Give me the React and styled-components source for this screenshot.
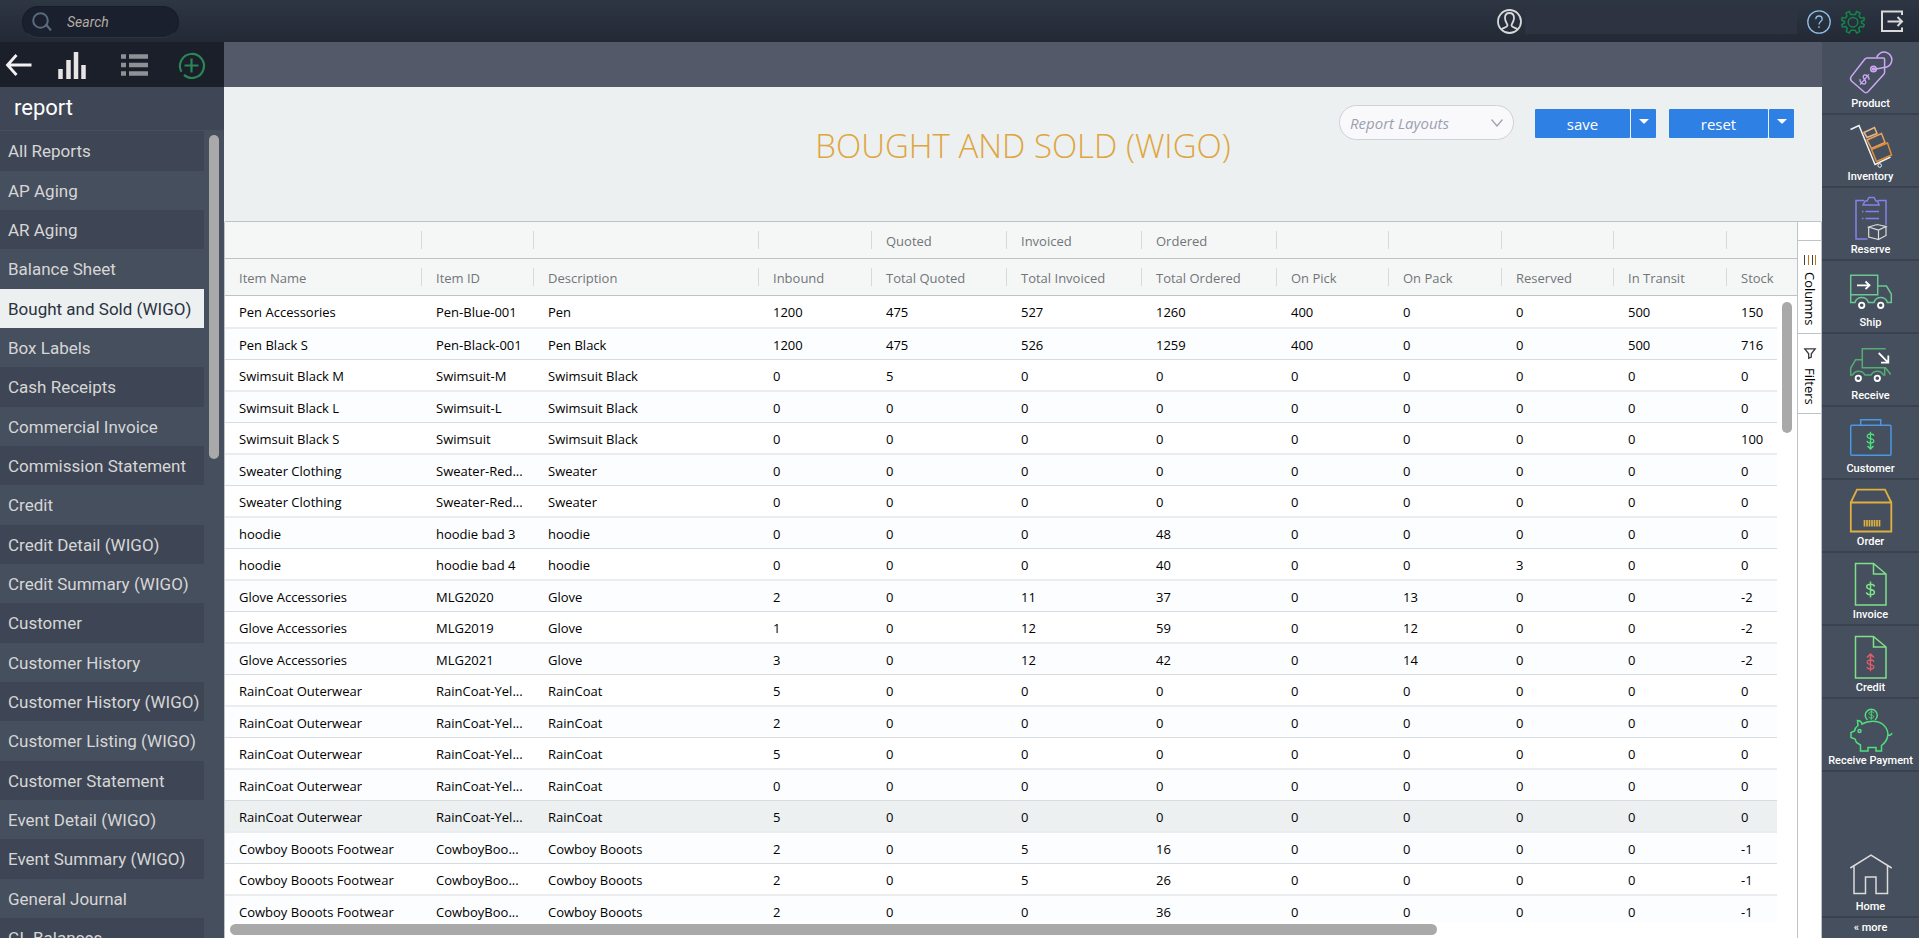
import React from "react";
import styled, { createGlobalStyle } from "styled-components";

const GlobalStyle = createGlobalStyle`
  * {
    box-sizing: border-box;
  }

  body {
    margin: 0;
    background: #464f5d;
    font-family: Roboto, "Liberation Sans", sans-serif;
  }

  button, input, select {
    font-family: inherit;
  }

  button {
    border: 0;
    padding: 0;
    background: none;
    cursor: pointer;
  }
`;

const Page = styled.div`
  display: flex;
  flex-direction: column;
  height: 100vh;
  overflow: hidden;
`;

const TopBar = styled.header`
  display: flex;
  flex: none;
  align-items: center;
  height: 42px;
  padding: 1px 15px 0 22px;
  background: linear-gradient(#2e3543, #232a36);
`;

const SearchBox = styled.label`
  display: flex;
  align-items: center;
  gap: 15px;
  width: 157px;
  height: 32px;
  padding: 0 9px;
  border: 1px solid #161c28;
  border-bottom-color: #2c3442;
  border-radius: 16px;
  background: #1a202d;
`;

const SearchInput = styled.input`
  width: 80px;
  border: 0;
  padding: 0;
  outline: 0;
  background: transparent;
  color: #ecf0f1;
  font-size: 14px;
  font-style: italic;

  &::placeholder {
    color: #b3aca5;
    opacity: 1;
  }
`;

const UserArea = styled.div`
  display: flex;
  align-items: center;
  gap: 3px;
  margin-left: auto;
`;

const UserName = styled.div`
  width: 272px;
  height: 24px;
  background: #2d3340;
`;

const TopActions = styled.div`
  display: flex;
  align-items: center;
  gap: 10px;
  margin-left: 10px;
`;

const IconButton = styled.button`
  display: flex;
`;

const Body = styled.div`
  display: flex;
  flex: 1;
  min-height: 0;
`;

const Sidebar = styled.aside`
  display: flex;
  flex: none;
  flex-direction: column;
  width: 224px;
  background: #464f5d;
`;

const SidebarTools = styled.div`
  display: grid;
  flex: none;
  grid-template-columns: 52px 63px 57px 1fr;
  align-items: center;
  height: 45px;
  padding: 1px 0 0 6px;
  background: #1a1f29;
`;

const SidebarTitle = styled.h2`
  flex: none;
  height: 44px;
  margin: 0;
  padding-left: 14px;
  border-bottom: 1px solid #464f5d;
  background: #3f4756;
  color: #ffffff;
  font-size: 22px;
  font-weight: 400;
  line-height: 41px;
`;

const ReportScroll = styled.div`
  display: flex;
  flex: 1;
  gap: 5px;
  min-height: 0;
  overflow: hidden;
`;

const ReportList = styled.ul`
  width: 204px;
  margin: 0;
  padding: 0;
  list-style: none;
`;

const ReportItem = styled.li`
  height: 39px;
  background: ${(props) => (props.$active ? "#ecf0f1" : "transparent")};

  &:nth-child(odd) {
    background: ${(props) => (props.$active ? "#ecf0f1" : "#3e4655")};
  }

  &:nth-child(3n + 1) {
    height: 40px;
  }
`;

const ReportLink = styled.a`
  display: block;
  padding-left: 8px;
  color: ${(props) => (props.$active ? "#2b3240" : "#d6d6d6")};
  font-size: 17px;
  line-height: 41px;
  text-decoration: none;
  white-space: nowrap;
`;

const VerticalThumb = styled.div`
  flex: none;
  width: 10px;
  height: ${(props) => props.$length}px;
  margin-top: ${(props) => props.$top}px;
  border-radius: 5px;
  background: #a9a9a9;
`;

const Main = styled.main`
  display: flex;
  flex: 1;
  flex-direction: column;
  min-width: 0;
  background: #ecf0f1;
`;

const TabStrip = styled.div`
  flex: none;
  height: 45px;
  background: #545969;
`;

const ReportHeader = styled.div`
  display: grid;
  flex: none;
  grid-template-columns: 1fr auto 1fr;
  align-items: start;
  height: 134px;
`;

const Title = styled.h1`
  grid-column: 2;
  margin: 36px 0 0;
  color: #dfa63e;
  font-family: "Open Sans", "Noto Sans", sans-serif;
  font-size: 33px;
  font-weight: 300;
  line-height: 46px;
  white-space: nowrap;
`;

const HeaderActions = styled.div`
  display: flex;
  justify-content: flex-end;
  align-items: flex-start;
  padding: 18px 28px 0 0;
  font-family: "Open Sans", "Noto Sans", sans-serif;
`;

const SelectWrap = styled.div`
  display: grid;
  align-items: center;
  width: 175px;
  margin-right: 21px;

  > * {
    grid-area: 1 / 1;
  }

  svg {
    justify-self: end;
    margin-right: 11px;
    pointer-events: none;
  }
`;

const LayoutSelect = styled.select`
  appearance: none;
  width: 100%;
  height: 35px;
  padding: 0 30px 0 10px;
  border: 1px solid #cdd2d5;
  border-radius: 18px;
  background: #f9f9fc;
  color: #9ba0b0;
  font-size: 15px;
  font-style: italic;
`;

const SplitButton = styled.div`
  display: flex;
  gap: 1px;
  margin-top: 4px;

  & + & {
    margin-left: 13px;
  }
`;

const BlueButton = styled.button`
  width: ${(props) => props.$width}px;
  height: 29px;
  padding-top: 1px;
  border-radius: 1px;
  background: #2f80e4;
  color: #ffffff;
  font-size: 15px;
  line-height: 20px;
`;

const CaretButton = styled(BlueButton)`
  display: flex;
  justify-content: center;
  padding-top: 10px;
`;

const Grid = styled.section`
  display: flex;
  flex: 1;
  min-height: 0;
  border: solid #bdc3c7;
  border-width: 1px 1px 0;
  border-top-left-radius: 2px;
  border-top-right-radius: 2px;
  background: #ffffff;
  font-family: "Open Sans", "Noto Sans", sans-serif;
`;

const GridPane = styled.div`
  display: flex;
  flex: 1;
  flex-direction: column;
  min-width: 0;
`;

const GridViewport = styled.div`
  position: relative;
  flex: 1;
  min-height: 0;
  overflow: hidden;
`;

const ScrollGutter = styled.div`
  position: absolute;
  top: 74px;
  right: 0;
  bottom: 0;
  width: 20px;
  padding-left: 5px;
  background: #ffffff;
`;

const HorizontalTrack = styled.div`
  flex: none;
  height: 16px;
  padding: 2px 0 0 5px;
`;

const HorizontalThumb = styled.div`
  width: 77%;
  height: 11px;
  border-radius: 6px;
  background: #a9a9a9;
`;

const Table = styled.table`
  width: 1614px;
  table-layout: fixed;
  border-collapse: separate;
  border-spacing: 0;
  font-size: 13px;
  text-align: left;
`;

const Col = styled.col`
  width: ${(props) => props.$width}px;
`;

const HeadCell = styled.th`
  height: 37px;
  padding: 0;
  border-bottom: 1px solid #bdc3c7;
  background: #f5f7f7;
  color: #727578;
  font-weight: 400;
`;

const HeadLabel = styled.div`
  height: 18px;
  padding-left: 14px;
  border-right: 1px solid #d7dadd;
  line-height: 20px;
  white-space: nowrap;
`;

const Row = styled.tr`
  background: #ffffff;

  td {
    height: 32px;
    border-bottom: 2px solid #ebecef;
  }

  &:first-child td {
    height: 33px;
  }

  &:nth-child(even) {
    background: #fcfdfe;
  }

  &:nth-child(even) td {
    height: 31px;
    border-bottom: 1px solid #d9dcde;
  }

  &:nth-child(17) {
    background: #ecf0f1;
  }
`;

const Cell = styled.td`
  padding: 1px 0 0 14px;
  color: #000000;
  line-height: 18px;
  white-space: nowrap;
`;

const SidePanel = styled.div`
  flex: none;
  width: 24px;
  padding-top: 18px;
  border-left: 1px solid #bdc3c7;
`;

const SideTab = styled.button`
  display: flex;
  align-items: center;
  gap: ${(props) => props.$gap}px;
  width: 100%;
  padding: 14px 0 8px;
  border-top: 1px solid #bdc3c7;
  color: #000000;
  font-size: 13px;
  line-height: 18px;
  writing-mode: vertical-rl;

  &:last-child {
    border-bottom: 1px solid #bdc3c7;
  }
`;

const Rail = styled.nav`
  display: flex;
  flex: none;
  flex-direction: column;
  width: 97px;
  background: #464f5d;
`;

const RailItem = styled.a`
  display: flex;
  flex: none;
  flex-direction: column;
  align-items: center;
  height: 73px;
  padding-top: 8px;
  border-bottom: 2px solid #3a424f;
  color: #ffffff;
  font-size: 11px;
  font-weight: 500;
  line-height: 18px;
  text-decoration: none;
  white-space: nowrap;

  &:nth-last-child(2) {
    margin-top: auto;
  }
`;

const MoreButton = styled.button`
  flex: none;
  height: 20px;
  color: #ffffff;
  font-size: 11px;
  font-weight: 500;
  line-height: 20px;
`;

const Glyph = styled.svg`
  display: block;
  flex: none;
  overflow: visible;
  fill: none;
  stroke: ${(props) => props.$color};
  stroke-width: ${(props) => props.$weight || 1}px;
`;

const dollar =
  "M4-3C3.6-4.8 2-5.3 0-5.3C-2.3-5.3-3.8-4.3-3.8-2.7C-3.8-1-2.3-.5 0 0C2.4.5 3.9 1.1 3.9 2.8C3.9 4.5 2.3 5.3 0 5.3C-2.3 5.3-3.8 4.6-4.1 2.9M0-8V8";

function RailGlyph({ color, children }) {
  return (
    <Glyph width="42" height="45" viewBox="0 -1 42 45" $color={color} $weight={1.5}>
      {children}
    </Glyph>
  );
}

function ProductIcon() {
  return (
    <RailGlyph color="#cda7f5">
      <path d="M17 7H33.500Q34.600 7 34.600 8.500V21Q34.600 22.500 33.600 23.600L18 40.800Q16.200 42.500 14.200 41L1.500 30Q-.3 28 1.200 25.600L14.500 8.500Q15.500 7 17 7Z" />
      <path d="M26.800 6.500A7.700 7.700 0 1 1 34 16.500L23.500 18.500" />
      <circle cx="23.500" cy="18" r="2.800" />
      <circle cx="23.500" cy="18" r="1" />
      <path d={dollar} transform="translate(14.500 28.500) rotate(40) scale(.85)" />
    </RailGlyph>
  );
}

function InventoryIcon() {
  return (
    <RailGlyph color="#e08e35">
      <path d="M.5 5.500L9 1.500L25 40.500L40.500 33" stroke="#f2f2f2" />
      <circle cx="29.700" cy="41.500" r="1.800" stroke="#f2f2f2" strokeWidth="1" />
      <path d="M14 8.500L24.500 3.500L27 9.500L17 13.500Z" stroke="#eab583" />
      <path d="M17 16L31.500 9.500L35 18.500L21.500 24.500Z" stroke="#e8a25c" />
      <path d="M21.500 25.500L37.500 19L41.500 31L26.500 37.500Z" />
    </RailGlyph>
  );
}

function ReserveIcon() {
  return (
    <RailGlyph color="#8880ea">
      <path d="M36 28V3.500H28M14 3.500H6V42H17.500" />
      <path d="M13 8L15 4H17L19 .5H24L26 4H27.500L29 8Z" />
      <path d="M12 14.500H13.500M15.500 14.500H29M12 21.500H13.500M15.500 21.500H29" />
      <path d="M18.700 30L27 27.500L36 29.500L28.500 33ZM18.700 30V40L28.500 42.500V33M28.500 42.500L36 38.500V29.500" stroke="#dddddd" strokeWidth="1.200" />
    </RailGlyph>
  );
}

function ShipIcon() {
  return (
    <RailGlyph color="#6cc794">
      <path d="M.7 5.300H27.700V24.700H.7Z" />
      <path d="M.7 24.700V32.500H5A7 7 0 0 1 18.400 32.500H24A7 7 0 0 1 37.400 32.500H41.300V24L36.500 16H27.700" />
      <g stroke="#ffffff" strokeWidth="1.800">
        <path d="M7 15.300H19.500M15.500 11.500L19.500 15.300L15.500 19" />
        <circle cx="11.700" cy="35.300" r="2.700" />
        <circle cx="30.700" cy="35.300" r="2.700" />
      </g>
    </RailGlyph>
  );
}

function ReceiveIcon() {
  return (
    <RailGlyph color="#55ad74">
      <path d="M35.700 5.700H12.300V24.700H35.500L40.700 31.500" />
      <path d="M12.300 16.700H5.700L.7 25V32H2.500A7 7 0 0 1 15 32H21A7 7 0 0 1 33.500 32H34.700V25" />
      <g stroke="#ffffff" strokeWidth="1.800">
        <path d="M28.700 10L38 19.300M38.300 12.500V19.700H31" />
        <circle cx="8.300" cy="35.300" r="2.700" />
        <circle cx="27.300" cy="35.300" r="2.700" />
      </g>
    </RailGlyph>
  );
}

function CustomerIcon() {
  return (
    <RailGlyph color="#4998e3">
      <rect x=".7" y="9.300" width="40.300" height="30" rx="1" />
      <path d="M10.700 9.300V3.700H30.700V9.300" />
      <path d={dollar} transform="translate(20.500 22.500) scale(.85)" stroke="#4fe07c" />
      <path d="M20.500 28V33M17.500 30L20.500 33L23.500 30" stroke="#4fe07c" />
    </RailGlyph>
  );
}

function OrderIcon() {
  return (
    <RailGlyph color="#e0b03e">
      <path d="M.8 13.500H41.300V42.500H.8ZM.8 13.500L7 .7H35L41.300 13.500" strokeWidth="1.800" />
      <path d="M14.500 31V37.500M17 31V37.500M19.500 31V37.500M22 31V37.500M24.500 31V37.500M27 31V37.500M29.500 31V37.500" strokeWidth="1.700" />
    </RailGlyph>
  );
}

function InvoiceIcon() {
  return (
    <RailGlyph color="#7fe08a">
      <path d="M5.500 1.500H23.500L36 12V43H5.500ZM23.500 1.500V12H36" />
      <path d={dollar} transform="translate(20.500 27.500)" />
    </RailGlyph>
  );
}

function CreditIcon() {
  return (
    <RailGlyph color="#7fe08a">
      <path d="M5.500 1.500H23.500L36 12V43H5.500ZM23.500 1.500V12H36" />
      <g stroke="#e35d6a">
        <path d={dollar} transform="translate(20.500 29.500) scale(.85)" />
        <path d="M20.500 24V19M17 22.500L20.500 19L24 22.500" />
      </g>
    </RailGlyph>
  );
}

function PaymentIcon() {
  return (
    <RailGlyph color="#4fe07c">
      <path d="M17.500 12A6 6 0 1 1 25 12" />
      <path d={dollar} transform="translate(21.300 7) scale(.6)" />
      <path d="M12 16C18 12.300 28 12 33 16.500C37.500 20.500 38.500 25 37.500 29C36.500 33.500 33.500 36 31.500 37.500V43H26V39.500H18V43H10.500V37L6.500 34.500L5 31L1 29.500V24.500L4.500 23C5 20.500 6.500 18.500 8 17.500L7.500 12.500C9.500 12.500 11.500 14 12 16Z" />
      <path d="M37.800 27C40 28 41.500 26.500 42 25" />
      <circle cx="9.500" cy="23" r="1.500" />
    </RailGlyph>
  );
}

function HomeIcon() {
  return (
    <RailGlyph color="#dcdcdc">
      <path d="M.3 14L21 1.200L41.700 14M4 12V39.500H15.500V23H26V39.500H37.500V12" />
    </RailGlyph>
  );
}

const railItems = [
  { label: "Product", icon: <ProductIcon /> },
  { label: "Inventory", icon: <InventoryIcon /> },
  { label: "Reserve", icon: <ReserveIcon /> },
  { label: "Ship", icon: <ShipIcon /> },
  { label: "Receive", icon: <ReceiveIcon /> },
  { label: "Customer", icon: <CustomerIcon /> },
  { label: "Order", icon: <OrderIcon /> },
  { label: "Invoice", icon: <InvoiceIcon /> },
  { label: "Credit", icon: <CreditIcon /> },
  { label: "Receive Payment", icon: <PaymentIcon /> },
  { label: "Home", icon: <HomeIcon /> },
];

const reports = [
  "All Reports",
  "AP Aging",
  "AR Aging",
  "Balance Sheet",
  "Bought and Sold (WIGO)",
  "Box Labels",
  "Cash Receipts",
  "Commercial Invoice",
  "Commission Statement",
  "Credit",
  "Credit Detail (WIGO)",
  "Credit Summary (WIGO)",
  "Customer",
  "Customer History",
  "Customer History (WIGO)",
  "Customer Listing (WIGO)",
  "Customer Statement",
  "Event Detail (WIGO)",
  "Event Summary (WIGO)",
  "General Journal",
  "GL Balances",
];

const columns = [
  { name: "Item Name", width: 197 },
  { name: "Item ID", width: 112 },
  { name: "Description", width: 225 },
  { name: "Inbound", width: 113 },
  { name: "Total Quoted", width: 135, group: "Quoted" },
  { name: "Total Invoiced", width: 135, group: "Invoiced" },
  { name: "Total Ordered", width: 135, group: "Ordered" },
  { name: "On Pick", width: 112 },
  { name: "On Pack", width: 113 },
  { name: "Reserved", width: 112 },
  { name: "In Transit", width: 113 },
  { name: "Stock", width: 112 },
];

const rows = [
  ["Pen Accessories", "Pen-Blue-001", "Pen", 1200, 475, 527, 1260, 400, 0, 0, 500, 150],
  ["Pen Black S", "Pen-Black-001", "Pen Black", 1200, 475, 526, 1259, 400, 0, 0, 500, 716],
  ["Swimsuit Black M", "Swimsuit-M", "Swimsuit Black", 0, 5, 0, 0, 0, 0, 0, 0, 0],
  ["Swimsuit Black L", "Swimsuit-L", "Swimsuit Black", 0, 0, 0, 0, 0, 0, 0, 0, 0],
  ["Swimsuit Black S", "Swimsuit", "Swimsuit Black", 0, 0, 0, 0, 0, 0, 0, 0, 100],
  ["Sweater Clothing", "Sweater-Red...", "Sweater", 0, 0, 0, 0, 0, 0, 0, 0, 0],
  ["Sweater Clothing", "Sweater-Red...", "Sweater", 0, 0, 0, 0, 0, 0, 0, 0, 0],
  ["hoodie", "hoodie bad 3", "hoodie", 0, 0, 0, 48, 0, 0, 0, 0, 0],
  ["hoodie", "hoodie bad 4", "hoodie", 0, 0, 0, 40, 0, 0, 3, 0, 0],
  ["Glove Accessories", "MLG2020", "Glove", 2, 0, 11, 37, 0, 13, 0, 0, -2],
  ["Glove Accessories", "MLG2019", "Glove", 1, 0, 12, 59, 0, 12, 0, 0, -2],
  ["Glove Accessories", "MLG2021", "Glove", 3, 0, 12, 42, 0, 14, 0, 0, -2],
  ["RainCoat Outerwear", "RainCoat-Yel...", "RainCoat", 5, 0, 0, 0, 0, 0, 0, 0, 0],
  ["RainCoat Outerwear", "RainCoat-Yel...", "RainCoat", 2, 0, 0, 0, 0, 0, 0, 0, 0],
  ["RainCoat Outerwear", "RainCoat-Yel...", "RainCoat", 5, 0, 0, 0, 0, 0, 0, 0, 0],
  ["RainCoat Outerwear", "RainCoat-Yel...", "RainCoat", 0, 0, 0, 0, 0, 0, 0, 0, 0],
  ["RainCoat Outerwear", "RainCoat-Yel...", "RainCoat", 5, 0, 0, 0, 0, 0, 0, 0, 0],
  ["Cowboy Booots Footwear", "CowboyBoo...", "Cowboy Booots", 2, 0, 5, 16, 0, 0, 0, 0, -1],
  ["Cowboy Booots Footwear", "CowboyBoo...", "Cowboy Booots", 2, 0, 5, 26, 0, 0, 0, 0, -1],
  ["Cowboy Booots Footwear", "CowboyBoo...", "Cowboy Booots", 2, 0, 0, 36, 0, 0, 0, 0, -1],
];

function Header() {
  return (
    <TopBar>
      <SearchBox>
        <Glyph width="20" height="20" viewBox="0 0 20 20" $color="#5b6a7c" $weight={2}>
          <circle cx="8.500" cy="8.500" r="7.300" />
          <path d="M12.500 14.500L14.500 13L19 18.500" />
        </Glyph>
        <SearchInput type="text" placeholder="Search" aria-label="Search" />
      </SearchBox>
      <UserArea>
        <IconButton aria-label="User">
          <Glyph width="25" height="25" viewBox="0 0 25 25" $color="#d9d9d9" $weight={1.8}>
            <circle cx="12.500" cy="12.500" r="11.500" />
            <path d="M4.500 20.500C6 18.500 10.500 18.500 10.500 16.500C10.500 14.500 8 13 8 9C8 5.500 10 4 12.500 4C15 4 17 5.500 17 9C17 13 14.500 14.500 14.500 16.500C14.500 18.500 19 18.500 20.500 20.500" />
          </Glyph>
        </IconButton>
        <UserName />
      </UserArea>
      <TopActions>
        <IconButton aria-label="Help">
          <Glyph width="24" height="24" viewBox="0 0 24 24" $color="#8fbfe8" $weight={1.3}>
            <circle cx="12" cy="12" r="11.200" />
            <path d="M8.800 9.300C8.800 7 10 6 12 6C14 6 15.200 7.300 15.200 9C15.200 11.500 12 11.500 12 14.500M12 16.300V18" />
          </Glyph>
        </IconButton>
        <IconButton aria-label="Settings">
          <Glyph width="24" height="24" viewBox="0 0 24 24" $color="#15834a" $weight={1.5}>
            <path d="M9.500 4.500L8.500 1.500L5 3L6 6L4.500 8L1 7.500L.8 10L3.500 11.500V13L.8 14.500L1.500 17L4.800 16.500L6.300 18.500L5.300 21.500L8.300 23L10 20.200H14L15.700 23L18.700 21.500L17.700 18.500L19.200 16.500L22.500 17L23.200 14.500L20.500 13V11.500L23.200 10L23 7.500L19.500 8L18 6L19 3L15.500 1.500L14.500 4.500Z" />
            <circle cx="12" cy="12.200" r="4.800" />
          </Glyph>
        </IconButton>
        <IconButton aria-label="Log out">
          <Glyph width="29" height="24" viewBox="-6 0 29 24" $color="#d9d9d9" $weight={2}>
            <path d="M21 5V1.500H1V21H21V17.500" />
            <path d="M6.500 11.500H20M16.500 7L21 11.500L16.500 16" />
          </Glyph>
        </IconButton>
      </TopActions>
    </TopBar>
  );
}

function ReportSidebar() {
  return (
    <Sidebar>
      <SidebarTools>
        <IconButton aria-label="Back">
          <Glyph width="26" height="22" viewBox="0 0 26 22" $color="#f2f2f2" $weight={2.8}>
            <path d="M2 11H25.500M10.500 1L1.500 11L10.500 21" />
          </Glyph>
        </IconButton>
        <IconButton aria-label="Charts">
          <Glyph width="28" height="27" viewBox="0 0 28 27" $color="#e9e4e4" $weight={4.5}>
            <path d="M2.500 27V17M10.500 27V8M18 27V0M25.500 27V13" />
          </Glyph>
        </IconButton>
        <IconButton aria-label="List">
          <Glyph width="27" height="22" viewBox="0 0 27 22" $color="#8e9195" $weight={4.5}>
            <path d="M0 2.500H5M8 2.500H27M0 11H5M8 11H27M0 19.500H5M8 19.500H27" />
          </Glyph>
        </IconButton>
        <IconButton aria-label="Add report">
          <Glyph width="27" height="27" viewBox="0 0 27 27" $color="#2b8557" $weight={2.2}>
            <path d="M3.500 19.800A12 12 0 1 1 6 22.900" />
            <path d="M13.500 6.500V20.500M6.500 13.500H20.500" />
          </Glyph>
        </IconButton>
      </SidebarTools>
      <SidebarTitle>report</SidebarTitle>
      <ReportScroll>
        <ReportList>
          {reports.map((report, index) => (
            <ReportItem key={report} $active={index === 4}>
              <ReportLink href="#" $active={index === 4}>
                {report}
              </ReportLink>
            </ReportItem>
          ))}
        </ReportList>
        <VerticalThumb $length={324} $top={4} />
      </ReportScroll>
    </Sidebar>
  );
}

function SaveGroup({ label, width }) {
  return (
    <SplitButton>
      <BlueButton $width={width}>{label}</BlueButton>
      <CaretButton $width={25} aria-label={label + " options"}>
        <svg width="10" height="5" viewBox="0 0 10 5">
          <path d="M0 0H10L6 4Q5 5 4 4Z" fill="#ffffff" />
        </svg>
      </CaretButton>
    </SplitButton>
  );
}

function ReportTable() {
  return (
    <Table>
      <colgroup>
        {columns.map((column) => (
          <Col key={column.name} $width={column.width} />
        ))}
      </colgroup>
      <thead>
        <tr>
          {columns.map((column) => (
            <HeadCell key={column.name}>
              <HeadLabel>{column.group}</HeadLabel>
            </HeadCell>
          ))}
        </tr>
        <tr>
          {columns.map((column) => (
            <HeadCell key={column.name} scope="col">
              <HeadLabel>{column.name}</HeadLabel>
            </HeadCell>
          ))}
        </tr>
      </thead>
      <tbody>
        {rows.map((row, index) => (
          <Row key={index}>
            {row.map((value, col) => (
              <Cell key={col}>{value}</Cell>
            ))}
          </Row>
        ))}
      </tbody>
    </Table>
  );
}

function App() {
  return (
    <Page>
      <GlobalStyle />
      <Header />
      <Body>
        <ReportSidebar />
        <Main>
          <TabStrip />
          <ReportHeader>
            <Title>BOUGHT AND SOLD (WIGO)</Title>
            <HeaderActions>
              <SelectWrap>
                <LayoutSelect aria-label="Report Layouts">
                  <option>Report Layouts</option>
                </LayoutSelect>
                <Glyph width="12" height="8" viewBox="0 0 12 8" $color="#9ba0b0" $weight={1.2}>
                  <path d="M.5 .5L6 7L11.500 .5" />
                </Glyph>
              </SelectWrap>
              <SaveGroup label="save" width={95} />
              <SaveGroup label="reset" width={99} />
            </HeaderActions>
          </ReportHeader>
          <Grid>
            <GridPane>
              <GridViewport>
                <ReportTable />
                <ScrollGutter>
                  <VerticalThumb $length={131} $top={6} />
                </ScrollGutter>
              </GridViewport>
              <HorizontalTrack>
                <HorizontalThumb />
              </HorizontalTrack>
            </GridPane>
            <SidePanel>
              <SideTab $gap={7}>
                <Glyph width="12" height="10" viewBox="0 0 12 10" $color="#4a4034" $weight={1}>
                  <path d="M.5 0V10M8.500 0V10" />
                  <path d="M4.500 0V10M11.500 0V10" stroke="#b9771d" />
                </Glyph>
                Columns
              </SideTab>
              <SideTab $gap={9}>
                <Glyph width="12" height="11" viewBox="0 0 12 11" $color="#3a3a3a" $weight={1.3}>
                  <path d="M.8 .8H11.200L7.300 5.800V9L4.700 10.300V5.800Z" />
                </Glyph>
                Filters
              </SideTab>
            </SidePanel>
          </Grid>
        </Main>
        <Rail>
          {railItems.map((item) => (
            <RailItem key={item.label} href="#">
              {item.icon}
              {item.label}
            </RailItem>
          ))}
          <MoreButton>« more</MoreButton>
        </Rail>
      </Body>
    </Page>
  );
}

export default App;
